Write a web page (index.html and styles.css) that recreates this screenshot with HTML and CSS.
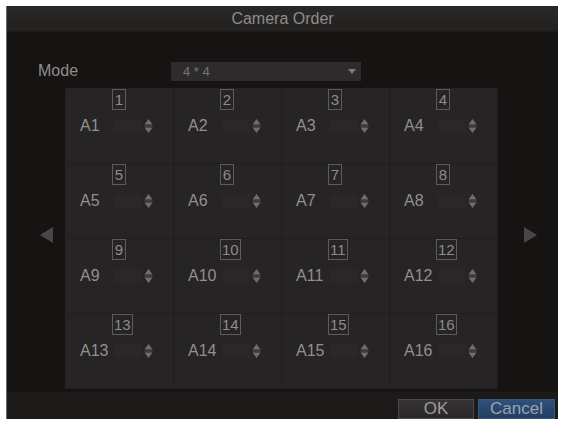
FILE: index.html
```html
<!DOCTYPE html>
<html>
<head>
<meta charset="utf-8">
<link rel="stylesheet" href="styles.css">
</head>
<body>
<div class="dialog">
  <div class="titlebar">Camera Order</div>
  <div class="content">
    <div class="mode-row">
      <span class="mode-label">Mode</span>
      <div class="select"><span>4 * 4</span><svg class="caret" width="8" height="5" viewBox="0 0 8 5"><path d="M0 0H8L4 5Z" fill="#7a7878"/></svg></div>
    </div>
    <div class="stage">
      <div class="arrow-area prev"><svg width="13" height="16" viewBox="0 0 13 16"><path d="M13 0V16L0 8Z" fill="#494647"/></svg></div>
      <div class="panel" id="panel"></div>
      <div class="arrow-area next"><svg width="13" height="16" viewBox="0 0 13 16"><path d="M0 0V16L13 8Z" fill="#494647"/></svg></div>
    </div>
  </div>
  <div class="footer">
    <button class="btn ok">OK</button>
    <button class="btn cancel">Cancel</button>
  </div>
</div>
<script src="app.js"></script>
</body>
</html>
```

FILE: app.js
```js
// Build the 4 x 4 channel cells
const panel = document.getElementById('panel');
const spin = '<svg class="spin" width="9" height="16" viewBox="0 0 9 16">' +
  '<path d="M4.5 1L8.5 6.5H0.5Z" fill="#6f6d6d"/>' +
  '<path d="M0.5 8H8.5" stroke="#555" stroke-width="1"/>' +
  '<path d="M4.5 15L0.5 9.5H8.5Z" fill="#6f6d6d"/></svg>';
for (let i = 1; i <= 16; i++) {
  const cell = document.createElement('div');
  cell.className = 'cell';
  cell.innerHTML =
    '<div class="num-row"><span class="num">' + i + '</span></div>' +
    '<div class="ch-row"><span class="ch">A' + i + '</span><span class="field"></span>' + spin + '</div>';
  panel.appendChild(cell);
}
```

FILE: styles.css
```css
html, body {
  margin: 0;
  padding: 0;
  background: #ffffff;
}
body {
  padding: 6px 4px 2px 6px;
  font-family: "Liberation Sans", Arial, sans-serif;
}
.dialog {
  width: 552px;
  height: 413px;
  background: #161313;
  border-left: 1px solid #6a6a6a;
  box-sizing: border-box;
  display: flex;
  flex-direction: column;
}
.titlebar {
  height: 25px;
  background: linear-gradient(#2a2727, #232020);
  color: #8e8c8c;
  font-size: 16px;
  line-height: 25px;
  text-align: center;
  border-bottom: 1px solid #1c1919;
}
.content {
  flex: 1;
  display: flex;
  flex-direction: column;
}
.mode-row {
  display: flex;
  align-items: center;
  margin-top: 29px;
  height: 20px;
}
.mode-label {
  width: 133px;
  padding-left: 31px;
  color: #8f8d8d;
  font-size: 16px;
}
.select {
  width: 190px;
  height: 19px;
  background: #2e2b2c;
  display: flex;
  align-items: center;
  justify-content: space-between;
  padding: 0 5px 0 12px;
  box-sizing: border-box;
  color: #777575;
  font-size: 13px;
}
.stage {
  display: flex;
  margin-top: 7px;
  height: 301px;
}
.arrow-area {
  display: flex;
  align-items: center;
  padding-bottom: 8px;
}
.prev {
  width: 58px;
  justify-content: flex-start;
  padding-left: 33px;
  box-sizing: border-box;
}
.next {
  width: 60px;
  justify-content: flex-start;
  padding-left: 26px;
  box-sizing: border-box;
}
.panel {
  width: 433px;
  background: #252223;
  display: grid;
  grid-template-columns: repeat(4, 1fr);
  grid-template-rows: repeat(4, 1fr);
  padding: 1px 0 0 1px;
  box-sizing: border-box;
}
.cell {
  border-right: 1px solid #1f1c1d;
  border-bottom: 1px solid #211e1f;
  background: #272425;
  display: flex;
  flex-direction: column;
}
.num-row {
  height: 21px;
  padding-left: 46px;
}
.num {
  display: inline-block;
  min-width: 10px;
  height: 19px;
  line-height: 19px;
  padding: 0 1px;
  border: 1px solid #5e5b5b;
  color: #8d8b8b;
  font-size: 15px;
  text-align: center;
}
.ch-row {
  display: flex;
  align-items: center;
  margin-top: 7px;
  height: 18px;
  padding-left: 14px;
}
.ch {
  width: 34px;
  color: #928f8f;
  font-size: 16px;
}
.field {
  width: 28px;
  height: 14px;
  background: #2a2728;
}
.spin {
  margin-left: 2px;
}
.footer {
  height: 27px;
  background: #1c1919;
  display: flex;
  justify-content: flex-end;
  align-items: flex-end;
  gap: 4px;
  padding: 0 3px 0 0;
  margin-top: 2px;
}
.btn {
  height: 20px;
  margin: 0;
  padding: 0;
  font-family: "Liberation Sans", Arial, sans-serif;
  font-size: 17px;
  line-height: 18px;
  text-align: center;
}
.ok {
  width: 76px;
  background: linear-gradient(#363434, #292727);
  border: 1px solid #4c4a4a;
  color: #9f9d9d;
}
.cancel {
  width: 77px;
  background: linear-gradient(#30507a, #233f62);
  border: 1px solid #36577e;
  color: #97a3b4;
}
```
